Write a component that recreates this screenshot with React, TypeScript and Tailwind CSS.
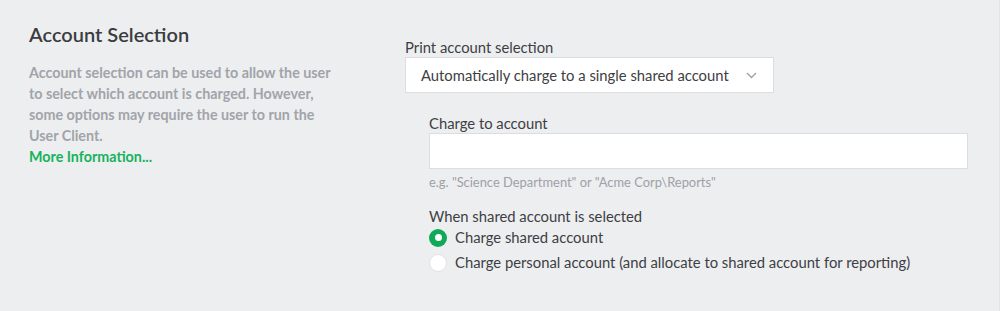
import React, { FC } from 'react';

const Chevron: FC = () => (
    <svg width="11" height="7" viewBox="0 0 11 7" fill="none">
        <path d="M1 1l4.5 4.5L10 1" stroke="#9ca0a6" strokeWidth="1.3" />
    </svg>
);

const Radio: FC<{ checked?: boolean; label: string }> = ({ checked, label }) => (
    <label className="flex items-center gap-[8px] h-[25px]">
        {checked ? (
            <span className="w-[18px] h-[18px] rounded-full bg-[#10a957] flex items-center justify-center">
                <span className="w-[7px] h-[7px] rounded-full bg-white" />
            </span>
        ) : (
            <span className="w-[18px] h-[18px] rounded-full bg-white border border-[#e1e2e5]" />
        )}
        <span className="text-[14.8px] text-[#3d4043]">{label}</span>
    </label>
);

const App: FC = () => {
    return (
        <div
            className="w-full h-[311px] bg-[#edeef0] flex pl-[29px] pt-[22px] border-r border-[#e3e4e6]"
            style={{ fontFamily: 'Lato, "Liberation Sans", sans-serif' }}
        >
            <div className="w-[376px] shrink-0">
                <h2 className="text-[20px] leading-[24px] text-[#3a3c3f] font-semibold">
                    Account Selection
                </h2>
                <p className="mt-[16px] w-[312px] text-[14.3px] leading-[21px] font-bold text-[#a1a4a9]">
                    Account selection can be used to allow the user to select which
                    account is charged. However, some options may require the user to
                    run the User Client.
                </p>
                <a className="block text-[14.3px] leading-[21px] font-bold text-[#15b35d]">
                    More Information...
                </a>
            </div>
            <div className="flex-1 pt-[16px]">
                <div className="text-[14.8px] leading-[18px] text-[#3d4043]">
                    Print account selection
                </div>
                <div className="mt-[1px] w-[369px] h-[36px] bg-white border border-[#dcdde0] flex items-center justify-between pl-[15px] pr-[16px]">
                    <span className="text-[14.8px] text-[#3d4043]">
                        Automatically charge to a single shared account
                    </span>
                    <Chevron />
                </div>
                <div className="pl-[24px] pr-[31px] pt-[21px]">
                    <div className="text-[14.8px] leading-[18px] text-[#3d4043]">
                        Charge to account
                    </div>
                    <div className="mt-[1px] h-[36px] bg-white border border-[#dcdde0]" />
                    <div className="mt-[5px] text-[12.9px] leading-[16px] text-[#9ea1a6]">
                        e.g. "Science Department" or "Acme Corp\Reports"
                    </div>
                    <div className="mt-[17px] text-[14.8px] leading-[18px] text-[#3d4043]">
                        When shared account is selected
                    </div>
                    <div className="flex flex-col">
                        <Radio checked label="Charge shared account" />
                        <Radio label="Charge personal account (and allocate to shared account for reporting)" />
                    </div>
                </div>
            </div>
        </div>
    );
};

export default App;
